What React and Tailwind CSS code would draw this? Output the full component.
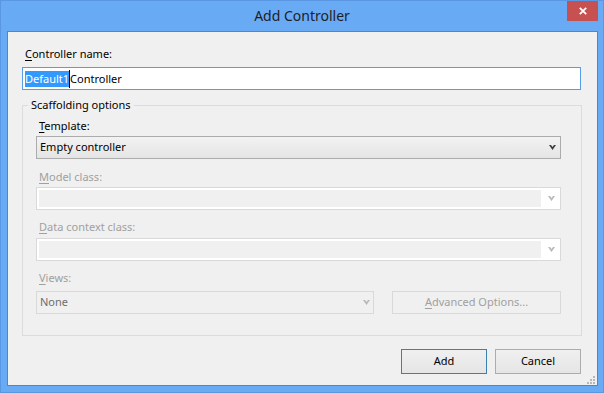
import React from "react";

function Chevron({ disabled }) {
  return (
    <svg width="7" height="5" viewBox="0 0 7 5" className="shrink-0">
      <path d="M0 0 H2 L3.5 2 L5 0 H7 L3.5 5 Z" fill={disabled ? "#b8b8b8" : "#3c3c3c"} />
    </svg>
  );
}

function Label({ u, rest, disabled, className = "" }) {
  return (
    <div className={`h-4 leading-4 pl-[3px] ${disabled ? "text-[#a0a0a0]" : "text-black"} ${className}`}>
      <span className="underline underline-offset-[2px] decoration-1">{u}</span>
      {rest}
    </div>
  );
}

function DisabledCombo({ className = "" }) {
  return (
    <div className={`h-[23px] border border-[#d9d9d9] bg-white flex pl-[2px] py-[2px] ${className}`}>
      <div className="flex-1 bg-[#f0f0f0]" />
      <div className="w-[19px] flex items-center justify-center pl-[2px]">
        <Chevron disabled />
      </div>
    </div>
  );
}

export default function App() {
  return (
    <div className="w-[604px] h-[393px] bg-[#69aaf5] border border-[#5a97e2] flex flex-col font-['Noto_Sans',sans-serif] text-[11px] select-none">
      {/* title bar */}
      <div className="h-[30px] relative flex items-center justify-center">
        <span className="text-[14px] text-[#1e1e1e] -mt-[1px]">Add Controller</span>
        <div className="absolute right-[5px] top-0 w-[31px] h-[20px] bg-[#c75050] flex items-center justify-center">
          <svg width="8" height="8" viewBox="0 0 8 8">
            <path d="M0.8 0.8 L7.2 7.2 M7.2 0.8 L0.8 7.2" stroke="#fff" strokeWidth="1.8" />
          </svg>
        </div>
      </div>

      {/* client area */}
      <div className="relative flex-1 ml-[6px] mr-[5px] mb-[6px] border border-[#4f86c8] bg-[#f0f0f0] pl-[14px] pr-[15px] pt-[14px]">
        <Label u="C" rest="ontroller name:" />
        <div className="mt-[5px] mr-[1px] h-[23px] border border-[#569de5] bg-white flex items-center pl-[2px] text-black">
          <span className="bg-[#3399ff] text-white leading-4">Default1</span>
          <span className="inline-block w-px h-[18px] bg-black" />
          <span className="leading-4">Controller</span>
        </div>

        <fieldset className="mt-[7px] h-[239px] border border-[#dcdcdc]">
          <legend className="ml-[5px] px-[3px] leading-4 text-black">Scaffolding options</legend>
          <div className="pl-[13px] pr-[20px] pt-[5px]">
            <Label u="T" rest="emplate:" />
            <div className="mt-[2px] h-[23px] border border-[#acacac] bg-linear-to-b from-[#f2f2f2] to-[#e5e5e5] flex items-center justify-between pl-[3px] pr-[4px] text-black">
              <span>Empty controller</span>
              <Chevron />
            </div>

            <Label u="M" rest="odel class:" disabled className="mt-[10px]" />
            <DisabledCombo className="mt-[2px]" />

            <Label u="D" rest="ata context class:" disabled className="mt-[9px]" />
            <DisabledCombo className="mt-[3px]" />

            <Label u="V" rest="iews:" disabled className="mt-[9px]" />
            <div className="mt-[5px] flex gap-[18px]">
              <div className="w-[338px] h-[23px] border border-[#d9d9d9] bg-[#f0f0f0] flex items-center justify-between pl-[3px] pr-[3px] text-[#6d6d6d]">
                <span>None</span>
                <Chevron disabled />
              </div>
              <div className="flex-1 h-[23px] border border-[#d9d9d9] bg-[#f0f0f0] flex items-center justify-center text-[#a0a0a0]">
                <span>
                  <span className="underline underline-offset-[2px] decoration-1">A</span>dvanced Options...
                </span>
              </div>
            </div>
          </div>
        </fieldset>

        <div className="mt-[13px] mr-[1px] flex justify-end gap-[8px] text-black">
          <button className="w-[86px] h-[25px] border border-[#3c7fb1] bg-linear-to-b from-[#f0f0f0] to-[#e5e5e5]">
            Add
          </button>
          <button className="w-[86px] h-[25px] border border-[#acacac] bg-linear-to-b from-[#f0f0f0] to-[#e5e5e5]">
            Cancel
          </button>
        </div>

        {/* size grip */}
        <svg width="8" height="8" viewBox="0 0 8 8" className="absolute right-[2px] bottom-[1px]">
          <rect x="6" y="0" width="2" height="2" fill="#b8b8b8" />
          <rect x="3" y="3" width="2" height="2" fill="#b8b8b8" />
          <rect x="6" y="3" width="2" height="2" fill="#b8b8b8" />
          <rect x="0" y="6" width="2" height="2" fill="#b8b8b8" />
          <rect x="3" y="6" width="2" height="2" fill="#b8b8b8" />
          <rect x="6" y="6" width="2" height="2" fill="#b8b8b8" />
        </svg>
      </div>
    </div>
  );
}
